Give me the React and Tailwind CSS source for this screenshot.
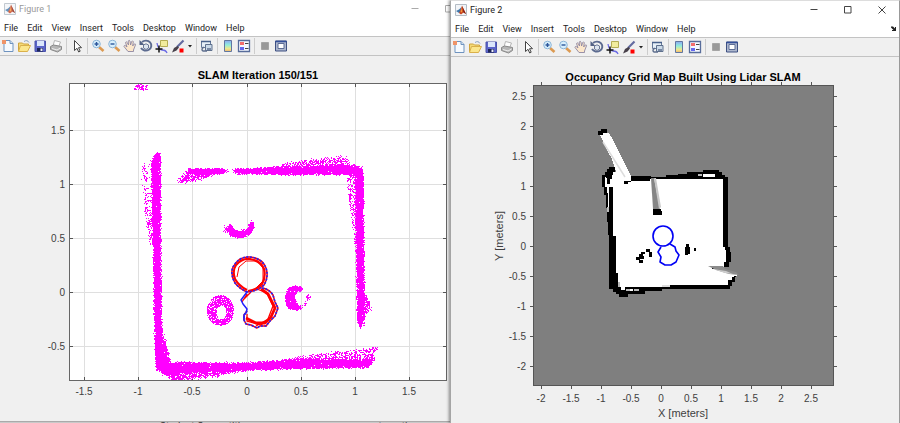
import React from "react";

const MENUS = ["File", "Edit", "View", "Insert", "Tools", "Desktop", "Window", "Help"];

// small seeded generator, so the scan looks the same on every render
const createRandom = (seed) => {
  let s = seed;
  return () => {
    s = (s * 1664525 + 1013904223) % 4294967296;
    return s / 4294967296;
  };
};

const isInside = (x, y, poly) => {
  let inside = false;
  for (let i = 0, j = poly.length - 1; i < poly.length; j = i++) {
    const [xi, yi] = poly[i];
    const [xj, yj] = poly[j];
    if (yi > y !== yj > y && x < ((xj - xi) * (y - yi)) / (yj - yi) + xi) {
      inside = !inside;
    }
  }
  return inside;
};

// polygon regions of lidar hits: how many hits, how far they spill over the edge
const REGIONS = [
  { n: 75, spill: 1, poly: [[136, 84], [149, 84], [148, 90], [134, 90]] },
  // left wall
  { n: 7600, spill: 2, poly: [[153, 160], [158, 152], [160, 156], [160, 250], [161, 320], [163, 345], [169, 370], [157, 370], [155, 320], [154, 240], [153, 180]] },
  { n: 330, spill: 2, poly: [[151, 160], [157, 154], [155, 245], [152, 240]] },
  { n: 200, spill: 2, poly: [[142, 168], [146, 162], [148, 190], [155, 250], [151, 246], [146, 218]] },
  { n: 240, spill: 2, poly: [[163, 335], [166, 345], [171, 366], [166, 366]] },
  // top wall
  { n: 1100, spill: 1, poly: [[189, 169], [222, 169], [228, 171], [222, 174], [188, 174]] },
  { n: 400, spill: 2, poly: [[179, 178], [190, 170], [220, 172], [202, 179], [179, 183]] },
  { n: 3900, spill: 2, poly: [[234, 170], [280, 168], [356, 166], [362, 172], [356, 174], [280, 174], [236, 173]] },
  { n: 620, spill: 2, poly: [[262, 169], [300, 161], [340, 157], [346, 157], [350, 165], [358, 168]] },
  // right wall
  { n: 4800, spill: 2, poly: [[355, 165], [360, 167], [363, 172], [363, 230], [364, 320], [361, 328], [358, 320], [357, 250], [356, 175]] },
  { n: 280, spill: 1, poly: [[346, 172], [355, 171], [357, 200], [358, 250], [355, 245], [350, 206]] },
  { n: 130, spill: 2, poly: [[363, 292], [367, 298], [371, 308], [364, 318]] },
  // bottom wall
  { n: 7800, spill: 2, poly: [[160, 364], [180, 363], [240, 364], [300, 360], [365, 360], [374, 360], [368, 367], [300, 368], [240, 370], [180, 372], [163, 374]] },
  { n: 900, spill: 2, poly: [[161, 368], [245, 370], [215, 376], [174, 380], [168, 377]] },
  { n: 620, spill: 2, poly: [[270, 362], [330, 353], [366, 349], [379, 347], [373, 354], [375, 360], [350, 362]] },
  // crescent above the track
  { n: 900, spill: 2, poly: [[228, 228], [230, 225], [234, 231], [240, 232], [248, 229], [252, 221], [253, 228], [249, 234], [240, 238], [231, 235]] },
  { n: 35, spill: 2, poly: [[224, 227], [228, 228], [230, 234], [227, 233]] },
  { n: 1100, spill: 1, poly: [[285, 298], [288, 289], [294, 286], [301, 287], [303, 290], [297, 292], [294, 298], [297, 304], [302, 308], [296, 310], [288, 308]] },
  { n: 26, spill: 1, poly: [[307, 295], [310, 295], [310, 299], [306, 302]] },
  { n: 12, spill: 1, poly: [[302, 304], [307, 303], [306, 306], [303, 307]] },
];

const buildCloud = () => {
  const rnd = createRandom(150151);
  const hits = new Set();
  const add = (x, y) => {
    if (y < 84 || y > 380) return;
    hits.add(`M${Math.round(x)} ${Math.round(y) + 0.5}h1`);
  };

  REGIONS.forEach(({ n, spill, poly }) => {
    const xs = poly.map((p) => p[0]);
    const ys = poly.map((p) => p[1]);
    const x0 = Math.min(...xs);
    const y0 = Math.min(...ys);
    const w = Math.max(...xs) - x0;
    const h = Math.max(...ys) - y0;
    let left = n;
    while (left > 0) {
      const x = x0 + rnd() * w;
      const y = y0 + rnd() * h;
      if (!isInside(x, y, poly)) continue;
      add(x + (rnd() + rnd() - 1) * spill - 0.5, y + (rnd() + rnd() - 1) * spill - 0.5);
      left -= 1;
    }
  });

  // ring left of the track, its hole sits a little low
  for (let i = 0; i < 1150; i++) {
    const a = rnd() * Math.PI * 2;
    const t = Math.sqrt(rnd());
    const x = 220 + Math.cos(a) * 13.5 * t;
    const y = 310 + Math.sin(a) * 15 * t;
    const hx = (x - 221) / 5;
    const hy = (y - 312) / 7;
    if (hx * hx + hy * hy > 1 && !(x < 210 && y < 302)) add(x, y);
  }
  return [...hits].join("");
};

const CLOUD = buildCloud();

const TRACK =
  "M247 292Q240 289 235 283Q230 274 233 267Q239 256 250 257Q262 258 266 268Q269 277 264 285Q258 291 247 292M262 288Q269 289 273 295L275 302L278 308L275 316L270 321L266 326H260L257 328L251 325L246 324L244 320V315L247 311";

/* ---------- toolbar ---------- */

const Icon = ({ name }) => {
  switch (name) {
    case "New":
      return (
        <>
          <path d="M4 2.500h6l3 3v8H4z" fill="#f6fafe" stroke="#6f93bf" />
          <path d="M10 2.500v3h3" fill="#cfe0f2" stroke="#6f93bf" />
          <path d="M2 2h4v4H2z" fill="#ef9468" />
        </>
      );
    case "Open":
      return (
        <>
          <path d="M2.500 13V5h4l1 1h5v2" fill="#f3d977" stroke="#d0a53d" />
          <path d="M2.500 13.500l2-6h10l-3 6z" fill="#fbe68c" stroke="#dab04a" />
          <path d="M8 3.500c2-1.500 4-1 5 1" fill="none" stroke="#8ba0c0" />
        </>
      );
    case "Save":
      return (
        <>
          <path d="M3 3h10.500v10.500H3z" fill="#5b64c9" stroke="#4a52ab" />
          <path d="M5 3h7v5H5z" fill="#dbe6fb" />
          <path d="M5 10h6v3.500H5z" fill="#1d2555" />
          <path d="M8.500 10.500h2v2.500h-2z" fill="#eef" />
        </>
      );
    case "Print":
      return (
        <>
          <path d="M5 8l1.500-5.500 6 1.500-2 5z" fill="#fdfdfd" stroke="#b5b5b5" />
          <path d="M2.500 8.500l3-1.500 8 1.500v3l-4 2.500-7-2.500z" fill="#b5b5b5" stroke="#888" />
          <path d="M4 10.500l5 1.500 3.500-2" stroke="#eee" fill="none" />
        </>
      );
    case "Edit Plot":
      return <path d="M5.500 2.500v10l2.500-2.200 1.700 3.700 1.500-.8-1.700-3.500h3z" fill="#fff" stroke="#444" />;
    case "Zoom In":
    case "Zoom Out":
      return (
        <>
          <path d="M9 9l4.500 4" stroke="#dc9a52" strokeWidth="2.600" />
          <circle cx="6.500" cy="6" r="3.800" fill="#d8effc" stroke="#8cb5d8" />
          <path d={name === "Zoom In" ? "M4.500 6h4M6.500 4v4" : "M4.500 6h4"} stroke="#2b569b" strokeWidth="1.400" />
        </>
      );
    case "Pan":
      return (
        <path
          d="M6 13.500L2 8.500q0-1.500 1.500-.8L5 9 3.500 4.500q.5-1.500 1.700 0L6.500 7l-.3-4q1-1.500 1.800 0l.6 4 1-3.500q1.200-1.200 1.700.2L10.700 8l1.500-2q1.500-.5 1.300.8L11.500 12v1.500z"
          fill="#fce7cb"
          stroke="#8e87a1"
          strokeWidth="0.900"
        />
      );
    case "Rotate 3D":
      return (
        <>
          <path d="M4 4a5.500 5 0 1 1-1 6" fill="none" stroke="#5c6b90" strokeWidth="1.900" />
          <path d="M1.500 2v5h5z" fill="#526184" />
          <path d="M5.500 7l2.500-1.200L10.500 7v3L8 11.500 5.500 10z" fill="#dde5ef" stroke="#6a7795" />
        </>
      );
    case "Data Cursor":
      return (
        <>
          <path d="M6.500 2.500h7v6h-7z" fill="#f1ec9d" stroke="#b4ad55" />
          <path d="M3 5q1 7 5 7t5 3" fill="none" stroke="#6c6ce5" strokeWidth="1.300" />
          <path d="M5 7.500v7M1.500 11h7" stroke="#111" strokeWidth="1.500" />
        </>
      );
    case "Brush":
      return (
        <>
          <path d="M13.500 2.500L7 9" stroke="#626aa0" strokeWidth="2.200" />
          <path d="M7.500 8L4 10l-2 4.500 4.500-2 2.500-3z" fill="#47404a" />
          <path d="M9.500 10.500h4v4h-4z" fill="#f00" />
        </>
      );
    case "Link Plot":
      return (
        <>
          <path d="M2.500 3.500h9v6h-9z" fill="#e6eff7" stroke="#657999" />
          <path d="M2 3.500h10" stroke="#48618b" strokeWidth="1.500" />
          <path d="M6.500 6.500h6.500v6H6.500z" fill="#cbdae8" stroke="#5e708d" />
          <path d="M5 9.500H4q-2 2 0 3.500h4M8 11h4" fill="none" stroke="#5d6e8d" strokeWidth="1.400" />
        </>
      );
    case "Insert Colorbar":
      return (
        <>
          <defs>
            <linearGradient id="jet" x1="0" x2="0" y1="0" y2="1">
              <stop offset="0" stopColor="#8ea6f4" />
              <stop offset="0.400" stopColor="#8feddc" />
              <stop offset="0.750" stopColor="#f0e78a" />
              <stop offset="1" stopColor="#efb36f" />
            </linearGradient>
          </defs>
          <path d="M4.500 2.500h7v11h-7z" fill="url(#jet)" stroke="#6177a1" />
        </>
      );
    case "Insert Legend":
      return (
        <>
          <path d="M2.500 2.500h11v11h-11z" fill="#f5f8ff" stroke="#586d9b" strokeWidth="1.300" />
          <path d="M4 4h4v3H4z" fill="#f46d6d" />
          <path d="M4 9h4v3H4z" fill="#6568ee" />
          <path d="M9 5.500h3.500M9 10.500h3.500" stroke="#444" />
        </>
      );
    case "Hide Plot Tools":
      return <path d="M4.500 4.500h7v7h-7z" fill="#999" stroke="#a5a5a5" />;
    default:
      return (
        <>
          <path d="M2.500 3h11v10h-11z" fill="#adb7cd" stroke="#3e5082" />
          <path d="M2.500 3.500h11" stroke="#334f99" strokeWidth="1.500" />
          <path d="M5 5.500h6v5H5z" fill="#fff" stroke="#5d6d96" />
        </>
      );
  }
};

const ToolButton = ({ name }) => (
  <button type="button" aria-label={name} className="h-4 w-4 shrink-0">
    <svg viewBox="0 0 16 16" className="h-4 w-4">
      <Icon name={name} />
    </svg>
  </button>
);

const Separator = () => (
  <span className="flex w-[5px] shrink-0 justify-center">
    <span className="h-4 w-px bg-[#cdcdcd]" />
  </span>
);

const Toolbar = () => (
  <div className="flex h-5 items-center border-y border-[#c3c3c3] bg-[#f0f0f0]">
    <ToolButton name="New" />
    <ToolButton name="Open" />
    <ToolButton name="Save" />
    <ToolButton name="Print" />
    <Separator />
    <ToolButton name="Edit Plot" />
    <Separator />
    <ToolButton name="Zoom In" />
    <ToolButton name="Zoom Out" />
    <ToolButton name="Pan" />
    <ToolButton name="Rotate 3D" />
    <ToolButton name="Data Cursor" />
    <ToolButton name="Brush" />
    <button type="button" aria-label="Brush colors" className="flex h-4 w-2 items-center justify-center">
      <svg viewBox="0 0 4 3" className="h-[3px] w-1">
        <path d="M0 0h4L2 2.500z" fill="#222" />
      </svg>
    </button>
    <Separator />
    <ToolButton name="Link Plot" />
    <Separator />
    <ToolButton name="Insert Colorbar" />
    <ToolButton name="Insert Legend" />
    <Separator />
    <ToolButton name="Hide Plot Tools" />
    <ToolButton name="Show Plot Tools" />
  </div>
);

/* ---------- window frame ---------- */

const MatlabLogo = ({ faded }) => (
  <svg viewBox="0 0 12 12" className={faded ? "h-3 w-3 opacity-80" : "h-3 w-3"}>
    <path d="M0.500 0.500h11v11H0.500z" fill="#f2f5f8" stroke="#b4bcc5" />
    <path d="M1 7l3-1.500L6.500 3 5.500 8 4 9z" fill="#3f76ab" />
    <path d="M4 9L6 5l1-3.500L11 10 8.500 8.500 6 10.500z" fill="#c8431f" />
    <path d="M7 2l1 3 .5 3.500L11 10z" fill="#7d1d12" />
    <path d="M5.500 8L7 3.500l.3 5z" fill="#f39a3c" />
  </svg>
);

const CAPTION_BUTTONS = [
  { label: "Minimize", d: "M0.500 3.500h7" },
  { label: "Maximize", d: "M0.500 0.500h6.500v6.500H0.500z" },
  { label: "Close", d: "M0.500 0.500l7 7M7.500 0.500l-7 7" },
];

const FigureWindow = ({ title, active, children }) => (
  <>
    <header className="flex h-[18px] items-center overflow-hidden bg-white pl-1">
      <MatlabLogo faded={!active} />
      <h1 className={`grow pl-[3px] text-[9px] leading-3 ${active ? "text-[#222]" : "text-[#999]"}`}>
        {title}
      </h1>
      <div className={active ? "flex" : "-mr-4 flex"}>
        {CAPTION_BUTTONS.slice(0, active ? 3 : 2).map(({ label, d }) => (
          <button
            key={label}
            type="button"
            aria-label={label}
            className={`flex h-4 w-[34px] items-center justify-center ${active ? "text-[#444]" : "text-[#aaa]"}`}
          >
            <svg viewBox="0 0 8 8" className="h-2 w-2">
              <path d={d} fill="none" stroke="currentColor" />
            </svg>
          </button>
        ))}
      </div>
    </header>
    <nav className="flex h-[18px] items-center gap-[9px] bg-white pl-1 pr-[3px] pt-px text-[9px] leading-3 text-[#222]">
      {MENUS.map((menu) => (
        <button key={menu} type="button">{menu}</button>
      ))}
      {active && (
        <button type="button" aria-label="Dock" className="ml-auto">
          <svg viewBox="0 0 5 5" className="h-[5px] w-[5px]">
            <path d="M0 0.500h2L4 2.500V1h1v4H1V4h1.500L0 1.500z" fill="#222" />
          </svg>
        </button>
      )}
    </nav>
    <Toolbar />
    {children}
  </>
);

/* ---------- figure 1: scans and trajectory ---------- */

const X1 = [["-1.5", 84], ["-1", 138], ["-0.5", 192], ["0", 247], ["0.5", 301], ["1", 355], ["1.5", 409]];
const Y1 = [["1.5", 130], ["1", 184], ["0.5", 238], ["0", 292], ["-0.5", 346]];

const ScanPlot = () => (
  <svg viewBox="0 56 450 365" className="block h-auto w-full bg-[#f0f0f0]">
    <rect x="69.500" y="83.500" width="377" height="297" fill="#fff" />
    <g stroke="#dfdfdf">
      {X1.map(([label, x]) => <path key={label} d={`M${x + 0.5} 84v296`} />)}
      {Y1.map(([label, y]) => <path key={label} d={`M70 ${y + 0.5}h376`} />)}
    </g>
    <rect x="69.500" y="83.500" width="377" height="297" fill="none" stroke="#666" />
    <g stroke="#555">
      {X1.map(([label, x]) => <path key={label} d={`M${x + 0.5} 84v3M${x + 0.5} 380v-3`} />)}
      {Y1.map(([label, y]) => <path key={label} d={`M70 ${y + 0.5}h3M446 ${y + 0.5}h-3`} />)}
    </g>
    <path d={CLOUD} stroke="#ff00ff" fill="none" />
    <g fill="none" strokeLinejoin="round">
      <path d={TRACK} stroke="#f00" strokeWidth="1.500" />
      <path d="M247 290Q239 286 235 279Q232 271 236 265Q242 258 250 259Q261 261 264 269Q266 277 262 284Q257 290 248 291" stroke="#f00" strokeWidth="2.200" />
      <path d="M237 277L239 267L246 261L257 261L263 268L263 281L256 288" stroke="#f00" />
      <path d="M261 289L268 294L272 302L275 308L271 317L265 323L256 323L246 318" stroke="#f00" strokeWidth="2.800" />
      <path d="M257 289L267 293L273 306L268 319L261 325L247 321V314M247 294L242 302M251 292L243 300M256 326L270 318" stroke="#f00" strokeWidth="1.300" />
      <path d={TRACK} stroke="#2020ff" strokeWidth="1.600" strokeDasharray="2 1.500" />
      <path d="M247 292L241 300L243 304L247 309L246 313L244 315V320" stroke="#2020ff" strokeWidth="1.500" />
    </g>
    <g fontFamily="Liberation Sans, Arial, sans-serif" fontSize="10" fill="#404040">
      {X1.map(([label, x]) => <text key={label} x={x} y="395" textAnchor="middle">{label}</text>)}
      {Y1.map(([label, y]) => <text key={label} x="65" y={y + 4} textAnchor="end">{label}</text>)}
      <text x="258" y="79" textAnchor="middle" fontSize="11" fontWeight="bold" fill="#000">
        SLAM Iteration 150/151
      </text>
    </g>
  </svg>
);

/* ---------- figure 2: occupancy grid ---------- */

const X2 = [["-2", 541], ["-1.5", 571], ["-1", 601], ["-0.5", 631], ["0", 661], ["0.5", 691], ["1", 721], ["1.5", 751], ["2", 781], ["2.5", 811]];
const Y2 = [["2.5", 96], ["2", 126], ["1.5", 156], ["1", 186], ["0.5", 216], ["0", 246], ["-0.5", 276], ["-1", 306], ["-1.5", 336], ["-2", 366]];

const GridMap = () => (
  <svg viewBox="451 57 448 366" className="block h-auto w-full bg-[#f0f0f0]">
    <rect x="533.500" y="85.500" width="300" height="300" fill="#7f7f7f" stroke="#555" />
    <g stroke="#555">
      {X2.map(([label, x]) => <path key={label} d={`M${x + 0.5} 386v3M${x + 0.5} 85v-3`} />)}
      {Y2.map(([label, y]) => <path key={label} d={`M533 ${y + 0.5}h-3M834 ${y + 0.5}h3`} />)}
    </g>
    <g shapeRendering="crispEdges">
      {/* walls */}
      <path
        fill="#000"
        d="M609 167H615V176H651V177H666V175H678V174H687V172H703V170H719V172H722V175H725V177H728V247H730V252H731V262H729V267H723V273H736V277H735V282H732V286H730V289H662V291H645V294H628V297H619V294H616V292H613V289H609V235H608V222H607V208H606V195H604V187H602V175H605V172H607V169H609z"
      />
      {/* free space */}
      <path
        fill="#fff"
        d="M613 172H628V181H650V179H723V247H725V250H726V262H724V267H712V269H724L729 271L738 275L735 276L732 277V280H728V285H668V287H618V273H616V236H613V187H605V184H610V179H612z"
      />
      <path fill="#fff" d="M600 135h3v-2h6l3 5 19 38v5h-4v3h-11v-13l-4-12-4-7-5-11z" />
      <path fill="#fff" d="M605 177h2v8h-2zM607 187h2v20h-1v-14h-1zM703 174h12v3h-12zM621 287h4v3h-4zM630 289h3v2h-3z" />
      <path fill="#bbb" d="M626 289h4v2h-4zM634 289h5v2h-5zM618 282h2v5h-2zM607 207h2v5h-2zM698 174h4v2h-4z" />
      <path fill="#000" d="M598 131h3v-2h6v4h-4v2h-5zM624 181h7v1h-3v2h-4zM610 168h4v4h-4zM606 173h4v5h-4z" />
      <path fill="#000" d="M653 209h8v2h1v4h-9z" />
      {/* obstacles */}
      <path fill="#000" d="M646 249h4v3h-4zM649 252h3v5h-3zM641 252h4v2h-2v2h1v3h-4v1h3v3h-4v-3h-3v-3h3v-3h2z" />
      <path fill="#000" d="M686 244h3v3h1v7h-2v1h-3v-8h1zM694 248h2v3h-2z" />
      <path fill="#ddd" d="M662 285h8v2h-8z" />
    </g>
    <path d="M651 178h3l6 31h-7z" fill="#858585" />
    <path d="M654 178h2l5 29-2 2z" fill="#c8c8c8" />
    <path d="M603 142l22 35" stroke="#ddd" strokeWidth="1.500" />
    <path d="M708 266h15l2 3 11 3 3 3-10-1-13-4z" fill="#8c8c8c" />
    <path d="M713 269l12 4 8 1-7-3z" fill="#ccc" />
    <g fill="none" stroke="#0000f5" strokeWidth="1.600">
      <circle cx="663" cy="236" r="10" />
      <path d="M670 244L675 247L676 251L679 255L676 262L671 265L665 265L660 262L661 257L658 252L661 247" strokeLinejoin="round" />
    </g>
    <g fontFamily="Liberation Sans, Arial, sans-serif" fontSize="10" fill="#404040">
      {X2.map(([label, x]) => <text key={label} x={x} y="402" textAnchor="middle">{label}</text>)}
      {Y2.map(([label, y]) => <text key={label} x="526" y={y + 4} textAnchor="end">{label}</text>)}
      <g fontSize="11" textAnchor="middle">
        <text x="683" y="417">X [meters]</text>
        <text x="503" y="236" transform="rotate(-90 503 236)">Y [meters]</text>
        <text x="683" y="81" fontWeight="bold" fill="#000">Occupancy Grid Map Built Using Lidar SLAM</text>
      </g>
    </g>
  </svg>
);

const App = () => {
  return (
    <main className="flex min-h-screen items-stretch overflow-hidden bg-[#c9c9c9] font-['Roboto','Open_Sans',sans-serif]">
      <div className="flex w-1/2 flex-col">
        <section className="bg-[#f0f0f0]">
          <FigureWindow title="Figure 1">
            <ScanPlot />
          </FigureWindow>
        </section>
        {/* page behind the window, only its top edge shows */}
        <div className="flex h-0.5 justify-between overflow-hidden border-t border-[#aaa] pl-40 text-[10px] leading-none text-[#333]">
          <span>Student Competitions</span>
          <span>automotive conver</span>
        </div>
      </div>
      <section className="z-10 w-1/2 border-l border-r border-t border-l-[#a5a5a5] border-r-[#999] border-t-[#ddd] bg-[#f0f0f0] shadow-[-1px_0_3px_rgba(0,0,0,0.45)]">
        <FigureWindow title="Figure 2" active>
          <GridMap />
        </FigureWindow>
      </section>
    </main>
  );
};

export default App;
